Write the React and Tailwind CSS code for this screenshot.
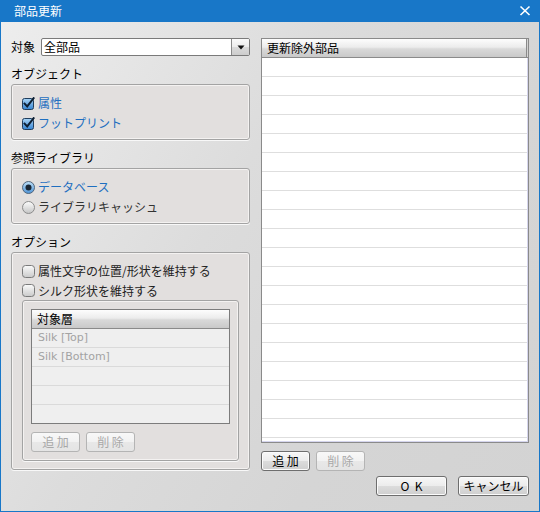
import React from "react";

function CheckBox({ checked }) {
  if (checked) {
    return (
      <svg width="13" height="13" viewBox="0 0 13 13" className="shrink-0">
        <defs>
          <linearGradient id="cbOn" x1="0" y1="0" x2="0" y2="1">
            <stop offset="0" stopColor="#a9d4f5" />
            <stop offset="1" stopColor="#3583d2" />
          </linearGradient>
        </defs>
        <rect x="0.5" y="1.5" width="11" height="11" rx="2" fill="url(#cbOn)" stroke="#203d5c" />
        <path d="M2.6 6.6 L5.2 9.4 L11.6 1.2" fill="none" stroke="#0d1f33" strokeWidth="2" strokeLinecap="square" />
      </svg>
    );
  }
  return (
    <svg width="13" height="13" viewBox="0 0 13 13" className="shrink-0">
      <defs>
        <linearGradient id="cbOff" x1="0" y1="0" x2="0" y2="1">
          <stop offset="0" stopColor="#fbfbfb" />
          <stop offset="1" stopColor="#cacaca" />
        </linearGradient>
      </defs>
      <rect x="0.5" y="0.5" width="12" height="12" rx="3" fill="url(#cbOff)" stroke="#7a7a7a" />
    </svg>
  );
}

function Radio({ checked }) {
  return (
    <svg width="13" height="13" viewBox="0 0 13 13" className="shrink-0">
      <defs>
        <linearGradient id="rOn" x1="0" y1="0" x2="0" y2="1">
          <stop offset="0" stopColor="#bfe0f8" />
          <stop offset="1" stopColor="#4e93d6" />
        </linearGradient>
        <linearGradient id="rOff" x1="0" y1="0" x2="0" y2="1">
          <stop offset="0" stopColor="#fdfdfd" />
          <stop offset="1" stopColor="#c4c4c4" />
        </linearGradient>
      </defs>
      {checked ? (
        <>
          <circle cx="6.5" cy="6.5" r="6" fill="url(#rOn)" stroke="#51657a" />
          <circle cx="6.5" cy="6.5" r="3" fill="#1a2633" />
        </>
      ) : (
        <circle cx="6.5" cy="6.5" r="6" fill="url(#rOff)" stroke="#8c8c8c" />
      )}
    </svg>
  );
}

function Btn({ children, disabled, className = "" }) {
  return (
    <div
      className={
        "h-[20px] rounded-[3px] border flex items-center justify-center text-[12px] leading-none whitespace-pre " +
        (disabled
          ? "border-[#b4b4b4] text-[#a8a8a8] bg-[linear-gradient(#f8f8f8_0%,#f2f2f2_50%,#e8e8e8_51%,#e4e4e4_100%)] "
          : "border-[#6e6e6e] text-black bg-[linear-gradient(#f7f7f7_0%,#ececec_50%,#dcdcdc_51%,#cfcfcf_100%)] shadow-[inset_0_0_0_1px_#fbfbfb] ") +
        className
      }
    >
      {children}
    </div>
  );
}

function Group({ className = "", children }) {
  return (
    <div
      className={
        "rounded-[3px] border border-[#a3a3a3] bg-[#e2dfde] shadow-[inset_0_0_0_1px_#f4f2f1,0_1px_0_#f8f8f8] " +
        className
      }
    >
      {children}
    </div>
  );
}

function HeaderCell({ children }) {
  return (
    <div className="h-[19px] shrink-0 border-b border-[#8a8a8a] bg-[linear-gradient(#fdfdfd_0%,#ececec_45%,#d9d9d9_55%,#c9c9c9_100%)] pl-[5px] text-[12px] leading-[18px] text-black">
      {children}
    </div>
  );
}

export default function App() {
  const rightRows = Array.from({ length: 21 });
  return (
    <div className="w-[540px] h-[512px] flex flex-col font-['Noto_Sans_CJK_JP','Noto_Sans',sans-serif] select-none">
      {/* Title bar */}
      <div className="h-[22px] shrink-0 bg-[#1877c8] flex items-center justify-between pl-[14px] pr-[8px]">
        <span className="text-white text-[12px] leading-none">部品更新</span>
        <svg width="12" height="12" viewBox="0 0 12 12" className="mr-[1px]">
          <path d="M1.5 1.5 L10.5 10 M10.5 1.5 L1.5 10" stroke="#ffffff" strokeWidth="1.6" />
        </svg>
      </div>

      {/* Body */}
      <div className="flex-1 flex flex-col border-x border-b border-[#1877c8] bg-[linear-gradient(120deg,#ededed_0%,#dcdcdc_40%,#d5d5d5_70%,#d3d3d3_100%)] pt-[16px] px-[10px]">
        <div className="flex gap-[11px]">
          {/* Left column */}
          <div className="w-[239px] shrink-0 flex flex-col">
            <div className="h-[18px] flex items-center">
              <span className="w-[30px] text-[12px] leading-none text-black">対象</span>
              <div className="flex-1 h-[18px] flex rounded-[2px] border border-[#7a7a7a] bg-white overflow-hidden">
                <div className="flex-1 pl-[2px] text-[12px] leading-[16px] text-black">全部品</div>
                <div className="w-[18px] border-l border-[#8a8a8a] bg-[linear-gradient(#fafafa_0%,#ececec_50%,#dadada_51%,#cdcdcd_100%)] flex items-center justify-center">
                  <svg width="8" height="5" viewBox="0 0 8 5">
                    <path d="M0.5 0.5 L7.5 0.5 L4 4.5 Z" fill="#111" />
                  </svg>
                </div>
              </div>
            </div>

            <div className="mt-[10px] h-[16px] text-[12px] leading-[16px] text-black">オブジェクト</div>
            <Group className="mt-[2px] h-[56px] px-[10px] pt-[8px]">
              <div className="h-[20px] flex items-center gap-[3px] text-[12px] text-[#1f6fc0]">
                <CheckBox checked />
                <span>属性</span>
              </div>
              <div className="h-[20px] flex items-center gap-[3px] text-[12px] text-[#1f6fc0]">
                <CheckBox checked />
                <span>フットプリント</span>
              </div>
            </Group>

            <div className="mt-[10px] h-[16px] text-[12px] leading-[16px] text-black">参照ライブラリ</div>
            <Group className="mt-[2px] h-[56px] px-[10px] pt-[8px]">
              <div className="h-[20px] flex items-center gap-[3px] text-[12px] text-[#1f6fc0]">
                <Radio checked />
                <span>データベース</span>
              </div>
              <div className="h-[20px] flex items-center gap-[3px] text-[12px] text-[#333333]">
                <Radio />
                <span>ライブラリキャッシュ</span>
              </div>
            </Group>

            <div className="mt-[10px] h-[16px] text-[12px] leading-[16px] text-black">オプション</div>
            <Group className="mt-[2px] h-[218px] px-[10px] pt-[8px]">
              <div className="h-[20px] flex items-center gap-[3px] text-[12px] text-[#222222]">
                <CheckBox />
                <span>属性文字の位置/形状を維持する</span>
              </div>
              <div className="h-[19px] flex items-center gap-[3px] text-[12px] text-[#222222]">
                <CheckBox />
                <span>シルク形状を維持する</span>
              </div>
              <Group className="h-[161px] px-[8px] pt-[8px]">
                <div className="h-[115px] flex flex-col border border-[#7c7c7c] bg-[#efefef] overflow-hidden">
                  <HeaderCell>対象層</HeaderCell>
                  {["Silk [Top]", "Silk [Bottom]", "", "", ""].map((t, i) => (
                    <div
                      key={i}
                      className="h-[19px] shrink-0 border-b border-[#dadada] pl-[6px] font-['DejaVu_Sans',sans-serif] text-[11px] leading-[18px] text-[#a3a3a3]"
                    >
                      {t}
                    </div>
                  ))}
                </div>
                <div className="mt-[8px] flex gap-[6px]">
                  <Btn disabled className="w-[49px]">追 加</Btn>
                  <Btn disabled className="w-[49px]">削 除</Btn>
                </div>
              </Group>
            </Group>
          </div>

          {/* Right column */}
          <div className="flex-1 flex flex-col">
            <div className="h-[405px] flex flex-col border border-[#8a8a8a] bg-white overflow-hidden">
              <div className="flex shrink-0">
                <div className="flex-1 border-r border-[#8a8a8a]">
                  <HeaderCell>更新除外部品</HeaderCell>
                </div>
                <div className="w-[1px] h-[19px] bg-[#d4d4d4] border-b border-[#8a8a8a]" />
              </div>
              <div className="flex-1 overflow-hidden border-r border-b border-[#d6d6ee]">
                {rightRows.map((_, i) => (
                  <div key={i} className="h-[19px] border-b border-[#dedede]" />
                ))}
              </div>
            </div>
            <div className="mt-[8px] flex gap-[6px]">
              <Btn className="w-[49px]">追 加</Btn>
              <Btn disabled className="w-[49px]">削 除</Btn>
            </div>
          </div>
        </div>

        <div className="mt-[5px] flex justify-end gap-[11px]">
          <Btn className="w-[71px]">{"O  K"}</Btn>
          <Btn className="w-[71px]">キャンセル</Btn>
        </div>
      </div>
    </div>
  );
}
